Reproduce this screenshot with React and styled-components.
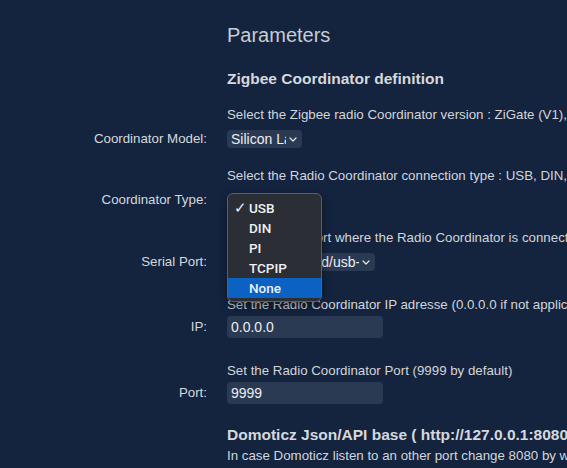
import React from 'react';
import styled, { createGlobalStyle } from 'styled-components';

const GlobalStyle = createGlobalStyle`
  html, body {
    margin: 0;
    padding: 0;
    background: #14243f;
    overflow: hidden;
  }
  body {
    font-family: "Liberation Sans", Arial, sans-serif;
    color: #d3d5d9;
  }
`;

const types = ['USB', 'DIN', 'PI', 'TCPIP', 'None'];

function Chevron() {
  return (
    <svg width="8" height="5" viewBox="0 0 8 5">
      <path d="M1 1l3 3 3-3" fill="none" stroke="#e6e8ec" strokeWidth="1.2" strokeLinecap="round" strokeLinejoin="round" />
    </svg>
  );
}

function App() {
  return (
    <Page>
      <GlobalStyle />
      <Head>
        <Title>Parameters</Title>
        <SectionTitle>Zigbee Coordinator definition</SectionTitle>
      </Head>

      <Param gap={7} after={20}>
        <Desc>Select the Zigbee radio Coordinator version : ZiGate (V1), ZiGate+ (V2), Texas Instruments ZNP, Silicon Labs</Desc>
        <Label>Coordinator Model:</Label>
        <Field>
          <SelectBox width={75}>
            <SelectText>Silicon Labs</SelectText>
            <Chevron />
          </SelectBox>
        </Field>
      </Param>

      <Param gap={7} after={21}>
        <Desc>Select the Radio Coordinator connection type : USB, DIN, Pi, TCPIP (Wifi, Ethernet) or None</Desc>
        <Label>Coordinator Type:</Label>
        <Field>
          <SelectBox width={60} open>
            <SelectText>USB</SelectText>
            <Chevron />
          </SelectBox>
          <Popup>
            {types.map((t, i) => (
              <Option key={t} active={i === 4}>
                <Check>{i === 0 ? '✓' : ''}</Check>
                {t}
              </Option>
            ))}
          </Popup>
        </Field>
      </Param>

      <Param gap={7} after={26}>
        <Desc>Set the serial port where the Radio Coordinator is connected</Desc>
        <Label>Serial Port:</Label>
        <Field>
          <SelectBox width={148}>
            <SelectText>/dev/serial/by-id/usb-Silicon_Labs_CP2102</SelectText>
            <Chevron />
          </SelectBox>
        </Field>
      </Param>

      <Param gap={3} after={25}>
        <Desc>Set the Radio Coordinator IP adresse (0.0.0.0 if not applicable)</Desc>
        <Label>IP:</Label>
        <Field>
          <TextInput defaultValue="0.0.0.0" />
        </Field>
      </Param>

      <Param gap={3} after={22}>
        <Desc>Set the Radio Coordinator Port (9999 by default)</Desc>
        <Label>Port:</Label>
        <Field>
          <TextInput defaultValue="9999" />
        </Field>
      </Param>

      <Head>
        <SectionTitle>Domoticz Json/API base ( http://127.0.0.1:8080 )</SectionTitle>
        <Note>
          In case Domoticz listen to an other port change 8080 by what ever you are using.
          <br />
          username:password@127.0.0.1:8080
        </Note>
      </Head>
    </Page>
  );
}

export default App;

const Page = styled.div`
  padding-top: 23px;
  height: 468px;
  box-sizing: border-box;
  white-space: nowrap;
`;

const Head = styled.div`
  display: grid;
  grid-template-columns: 1fr;
  padding-left: 227px;
`;

const Title = styled.div`
  font-size: 20px;
  line-height: 24px;
  color: #c9ccd2;
  margin-bottom: 23px;
`;

const SectionTitle = styled.div`
  font-size: 15.5px;
  line-height: 18px;
  font-weight: bold;
  color: #d6d8dc;
  margin-bottom: 19px;

  & + div {
    margin-top: -16px;
  }
`;

const Note = styled.div`
  font-size: 13.3px;
  line-height: 18px;
  color: #d3d5d9;
`;

const Param = styled.div`
  display: grid;
  grid-template-columns: 207px 1fr;
  column-gap: 20px;
  row-gap: ${p => p.gap}px;
  align-items: center;
  margin-bottom: ${p => p.after}px;
`;

const Desc = styled.div`
  grid-column: 2;
  font-size: 13.3px;
  line-height: 16px;
  color: #d3d5d9;
`;

const Label = styled.div`
  grid-column: 1;
  text-align: right;
  font-size: 13.3px;
  line-height: 16px;
  color: #d6d8dc;
`;

const Field = styled.div`
  grid-column: 2;
  position: relative;
  display: flex;
  align-items: center;
`;

const SelectBox = styled.div`
  width: ${p => p.width}px;
  height: 18px;
  box-sizing: border-box;
  display: flex;
  align-items: center;
  gap: 3px;
  padding: 0 5px 0 4px;
  background: #2a3a52;
  border-radius: 4px;
  visibility: ${p => (p.open ? 'hidden' : 'visible')};

  svg {
    flex: none;
  }
`;

const SelectText = styled.span`
  flex: 1;
  overflow: hidden;
  font-size: 14px;
  color: #eceef1;
  white-space: nowrap;
`;

const TextInput = styled.input`
  width: 156px;
  height: 22px;
  box-sizing: border-box;
  border: none;
  outline: none;
  border-radius: 4px;
  background: #2a3a52;
  color: #eceef1;
  font-family: "Liberation Sans", Arial, sans-serif;
  font-size: 14px;
  padding: 0 4px;
`;

const Popup = styled.div`
  position: absolute;
  left: 0;
  top: 2px;
  z-index: 5;
  width: 95px;
  box-sizing: border-box;
  padding: 4px 0 3px;
  background: #2b2e34;
  border: 1px solid #5c5f66;
  border-radius: 6px;
  box-shadow: 0 4px 10px rgba(0, 0, 0, 0.45);
`;

const Option = styled.div`
  height: 20px;
  display: flex;
  align-items: center;
  padding-left: 6px;
  font-family: Roboto, "Liberation Sans", sans-serif;
  font-weight: 500;
  font-size: 13.5px;
  color: #eef0f3;
  background: ${p => (p.active ? '#0b62c2' : 'transparent')};
`;

const Check = styled.span`
  width: 15px;
  font-size: 15px;
`;
